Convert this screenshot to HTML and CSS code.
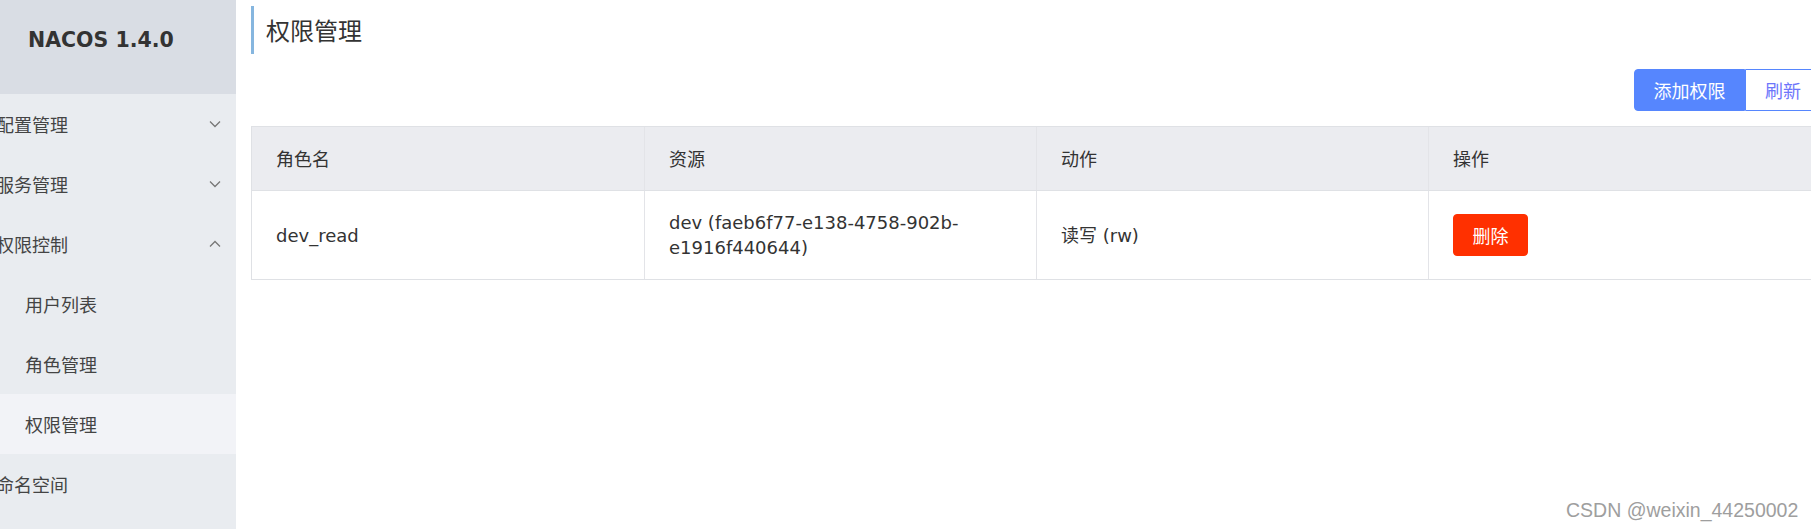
FILE: index.html
```html
<!DOCTYPE html>
<html lang="zh-CN">
<head>
<meta charset="utf-8">
<title>权限管理 - NACOS</title>
<link rel="stylesheet" href="styles.css">
</head>
<body>
<div class="layout">
  <aside class="sidebar">
    <div class="brand">NACOS 1.4.0</div>
    <nav class="menu">
      <div class="menu-item top"><span class="label">配置管理</span>
        <svg class="chev" width="12" height="8" viewBox="0 0 12 8"><path d="M1 1.5 L6 6.5 L11 1.5" fill="none" stroke="#777" stroke-width="1.3"/></svg>
      </div>
      <div class="menu-item top"><span class="label">服务管理</span>
        <svg class="chev" width="12" height="8" viewBox="0 0 12 8"><path d="M1 1.5 L6 6.5 L11 1.5" fill="none" stroke="#777" stroke-width="1.3"/></svg>
      </div>
      <div class="menu-item top"><span class="label">权限控制</span>
        <svg class="chev" width="12" height="8" viewBox="0 0 12 8"><path d="M1 6.5 L6 1.5 L11 6.5" fill="none" stroke="#777" stroke-width="1.3"/></svg>
      </div>
      <div class="menu-item sub"><span class="label">用户列表</span></div>
      <div class="menu-item sub"><span class="label">角色管理</span></div>
      <div class="menu-item sub active"><span class="label">权限管理</span></div>
      <div class="menu-item top"><span class="label">命名空间</span></div>
    </nav>
  </aside>
  <main class="main">
    <h1 class="page-title">权限管理</h1>
    <div class="toolbar">
      <button class="btn btn-primary">添加权限</button>
      <button class="btn btn-normal">刷新</button>
    </div>
    <div class="table">
      <div class="row head">
        <div class="cell">角色名</div>
        <div class="cell">资源</div>
        <div class="cell">动作</div>
        <div class="cell">操作</div>
      </div>
      <div class="row body">
        <div class="cell">dev_read</div>
        <div class="cell">dev (faeb6f77-e138-4758-902b-<br>e1916f440644)</div>
        <div class="cell">读写 (rw)</div>
        <div class="cell"><button class="btn btn-danger">删除</button></div>
      </div>
    </div>
  </main>
</div>
<div class="watermark">CSDN @weixin_44250002</div>
</body>
</html>
```

FILE: styles.css
```css
html, body {
  margin: 0;
  padding: 0;
  overflow: hidden;
  background: #fff;
}
body {
  font-family: "DejaVu Sans", "Noto Sans CJK SC", sans-serif;
  color: #333;
  width: 1811px;
  height: 529px;
  position: relative;
}
.layout {
  display: flex;
  height: 529px;
  width: 1900px;
}
.sidebar {
  flex: 0 0 236px;
  background: #e9ecf0;
  display: flex;
  flex-direction: column;
}
.brand {
  height: 94px;
  background: #d9dde4;
  font-family: "DejaVu Sans", sans-serif;
  font-weight: bold;
  font-size: 20.5px;
  line-height: 81px;
  padding-left: 28px;
  color: #333;
  box-sizing: border-box;
}
.menu {
  display: flex;
  flex-direction: column;
}
.menu-item {
  height: 60px;
  display: flex;
  align-items: center;
  justify-content: space-between;
  font-family: "Noto Sans CJK SC", sans-serif;
  font-size: 18px;
  color: #444;
  box-sizing: border-box;
  padding-right: 15px;
}
.menu-item.top {
  padding-left: 0;
}
.menu-item.top .label {
  margin-left: -4px;
}
.menu-item.sub {
  padding-left: 25px;
}
.menu-item.active {
  background: #f2f3f7;
}
.chev {
  display: block;
}
.main {
  flex: 0 0 1570px;
  padding: 0 15px;
  display: flex;
  flex-direction: column;
}
.page-title {
  margin: 6px 0 0 0;
  height: 48px;
  border-left: 3px solid #86b6df;
  padding-left: 12px;
  font-family: "Noto Sans CJK SC", sans-serif;
  font-weight: normal;
  font-size: 24px;
  line-height: 48px;
  color: #333;
}
.toolbar {
  margin-top: 15px;
  display: flex;
  justify-content: flex-end;
  height: 42px;
}
.btn {
  font-family: "Noto Sans CJK SC", sans-serif;
  font-size: 18px;
  height: 42px;
  line-height: 40px;
  padding: 0;
  border-radius: 4px;
  border: 1px solid transparent;
  cursor: pointer;
  box-sizing: border-box;
  white-space: nowrap;
  text-align: center;
}
.btn-primary {
  background: #5686fe;
  border-color: #5686fe;
  color: #fff;
  border-top-right-radius: 0;
  border-bottom-right-radius: 0;
  width: 111px;
}
.btn-normal {
  background: #fff;
  border-color: #5686fe;
  color: #6d76fb;
  border-top-left-radius: 0;
  border-bottom-left-radius: 0;
  width: 76px;
  padding-left: 19px;
  text-align: left;
}
.table {
  margin-top: 15px;
  border: 1px solid #dfe1e5;
  width: 1570px;
  box-sizing: border-box;
}
.row {
  display: grid;
  grid-template-columns: 392px 392px 392px 1fr;
}
.row.head {
  background: #ebecf0;
  height: 64px;
  border-bottom: 1px solid #dfe1e5;
  box-sizing: border-box;
}
.row.body {
  height: 88px;
}
.cell {
  display: flex;
  align-items: center;
  padding: 0 24px;
  font-size: 18px;
  line-height: 25px;
  border-left: 1px solid #e3e4e8;
  color: #333;
}
.cell:first-child {
  border-left: none;
}
.row.head .cell {
  font-family: "Noto Sans CJK SC", sans-serif;
  font-size: 18px;
}
.btn-danger {
  background: #ff3000;
  border-color: #ff3000;
  color: #fff;
  width: 75px;
}
.watermark {
  position: absolute;
  left: 1566px;
  top: 499px;
  font-family: "Liberation Sans", sans-serif;
  font-size: 19.5px;
  line-height: 22px;
  color: #9e9e9e;
  white-space: nowrap;
}
```
